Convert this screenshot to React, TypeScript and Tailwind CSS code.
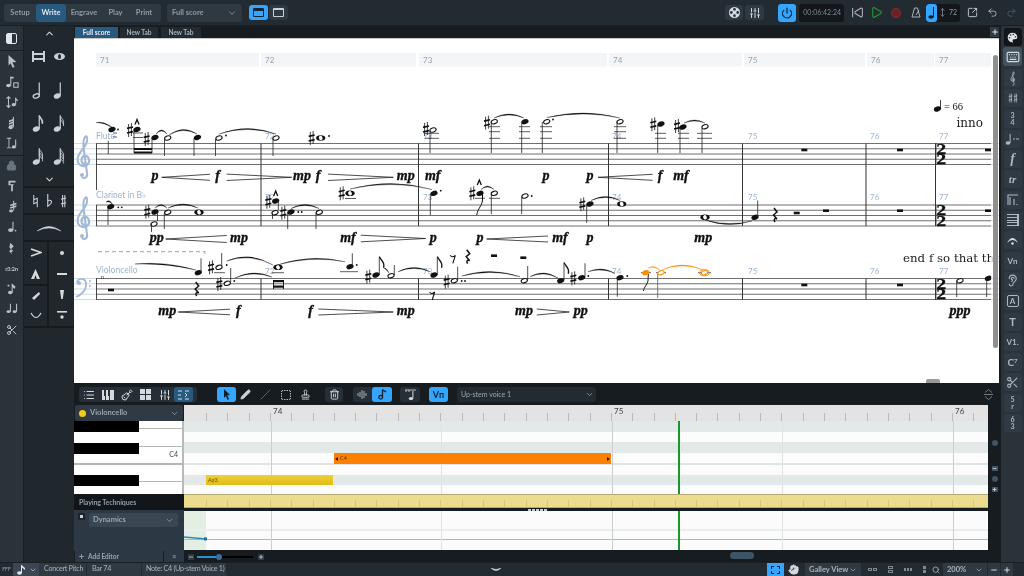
import React from "react";
import {
  ChevronDown, ChevronUp, Power, Play, SkipBack, Undo2, Redo2, SquareArrowOutUpRight, Lock, Pencil, Slash, Trash2, Hand, Search, Plus, Minus, List, SlidersVertical, Guitar, Music2, Keyboard, Palette, Ear, Scissors, MoveVertical, SquareDashed, Stamp,
} from "lucide-react";

const INK = "#111";
const BLUE = "#9db4d0";
const OR = "#ff8a00";

const head = (x: number, y: number, c = INK) => <ellipse cx={x} cy={y} rx={3.7} ry={2.5} fill={c} transform={`rotate(-18 ${x} ${y})`} />;
const open = (x: number, y: number, c = INK) => <ellipse cx={x} cy={y} rx={3.2} ry={2} fill="#fff" stroke={c} strokeWidth={1.1} transform={`rotate(-18 ${x} ${y})`} />;
const whole = (x: number, y: number, c = INK) => (
  <g>
    <ellipse cx={x} cy={y} rx={4.6} ry={2.8} fill={c} />
    <ellipse cx={x} cy={y} rx={1.8} ry={2.2} fill="#fff" transform={`rotate(-30 ${x} ${y})`} />
  </g>
);
const dot = (x: number, y: number) => <circle cx={x} cy={y} r={0.9} fill={INK} />;
const stem = (x: number, y1: number, y2: number, c = "#222") => <line x1={x} x2={x} y1={y1} y2={y2} stroke={c} strokeWidth={0.8} />;
const led = (x1: number, x2: number, y: number, c = "#333") => <line x1={x1} x2={x2} y1={y} y2={y} stroke={c} strokeWidth={0.8} />;
const sharp = (x: number, y: number) => (
  <g stroke={INK}>
    <line x1={x - 1.4} x2={x - 1.4} y1={y - 6} y2={y + 7} strokeWidth={0.8} />
    <line x1={x + 1.4} x2={x + 1.4} y1={y - 7} y2={y + 6} strokeWidth={0.8} />
    <line x1={x - 3} x2={x + 3} y1={y - 1.6} y2={y - 3} strokeWidth={1.6} />
    <line x1={x - 3} x2={x + 3} y1={y + 3} y2={y + 1.6} strokeWidth={1.6} />
  </g>
);
const slur = (x1: number, y1: number, x2: number, y2: number, top: number, c = INK) => {
  const cx = (x1 + x2) / 2;
  const cy = 2 * top - (y1 + y2) / 2;
  return <path d={`M${x1} ${y1} Q${cx} ${cy} ${x2} ${y2} Q${cx} ${cy + 2} ${x1} ${y1}Z`} fill={c} stroke={c} strokeWidth={0.3} />;
};
const uslur = (x1: number, y1: number, x2: number, y2: number, bot: number) => {
  const cx = (x1 + x2) / 2;
  const cy = 2 * bot - (y1 + y2) / 2;
  return <path d={`M${x1} ${y1} Q${cx} ${cy} ${x2} ${y2} Q${cx} ${cy - 2} ${x1} ${y1}Z`} fill={INK} stroke={INK} strokeWidth={0.3} />;
};
const flag = (x: number, y: number) => <path d={`M${x} ${y} C${x + 1} ${y + 4} ${x + 6} ${y + 5} ${x + 4} ${y + 11}`} stroke={INK} strokeWidth={1.3} fill="none" />;
const hair = (x1: number, x2: number, y: number, open: number, cresc: boolean) => {
  const a = cresc ? x1 : x2;
  const b = cresc ? x2 : x1;
  return (
    <g stroke="#222" strokeWidth={0.8}>
      <line x1={a} y1={y} x2={b} y2={y - open} />
      <line x1={a} y1={y} x2={b} y2={y + open} />
    </g>
  );
};
const dyn = (x: number, y: number, t: string) => (
  <text x={x} y={y + 3} textAnchor="middle" fontFamily="Liberation Serif" fontWeight="700" fontStyle="italic" fontSize={14} fill={INK} stroke={INK} strokeWidth={0.35}>{t}</text>
);
const num = (x: number, y: number, t: string) => (
  <text x={x} y={y} fontFamily="Lato" fontSize={8} fill={BLUE}>{t}</text>
);
const rest = (x: number, y: number) => <rect x={x - 3} y={y - 1.3} width={6} height={2.6} fill={INK} />;
const qrest = (x: number, y: number) => <path d={`M${x - 1} ${y - 7} L${x + 2} ${y - 3} L${x - 1.5} ${y} L${x + 2} ${y + 4} C${x} ${y + 3} ${x - 2} ${y + 4} ${x} ${y + 7}`} stroke={INK} strokeWidth={1.5} fill="none" />;
const erest = (x: number, y: number) => <path d={`M${x - 3} ${y - 3} C${x - 2} ${y - 1} ${x} ${y - 1} ${x + 2} ${y - 3} L${x - 0.5} ${y + 5}`} stroke={INK} strokeWidth={1.1} fill="none" />;
const accent = (x: number, y: number) => <path d={`M${x - 2} ${y + 2.5} L${x} ${y - 2.5} L${x + 2} ${y + 2.5}`} stroke={INK} strokeWidth={1.3} fill="none" />;
const timeSig = (y: number) => (
  <g>
    <rect x={935} y={y} width={1.4} height={21} fill="#333" />
    <text transform={`translate(936.3 ${y + 10.3}) scale(1.28 1)`} fontFamily="Liberation Serif" fontWeight="700" fontSize={15.5} fill={INK} stroke={INK} strokeWidth={0.3}>
      <tspan x={0} y={0}>2</tspan>
      <tspan x={0} y={10.6}>2</tspan>
    </text>
  </g>
);
const clef = (y: number) => (
  <g transform={`translate(84 ${y})`}>
    <path
      d="M1 5C-3 5-4-1 0-3C5-4 7 3 3 6C-2 9-8 5-6-2C-5-7 2-12 3-18C4-22 2-24 1-22C-1-19-1-14 0-8L3 14C4 19 0 20-2 18"
      fill="none"
      stroke="#a3b9d6"
      strokeWidth={2.1}
    />
    <circle cx={-2} cy={16} r={2} fill="#a3b9d6" />
  </g>
);

function Staff({ y }: { y: number }) {
  return (
    <g>
      {[0, 5.25, 10.5, 15.75, 21].map((d) => (
        <g key={d}>
          <line x1={74} x2={96} y1={y + d} y2={y + d} stroke="#c3d2e6" strokeWidth={0.8} />
          <line x1={96} x2={999} y1={y + d} y2={y + d} stroke="#4a4a4a" strokeWidth={0.8} />
        </g>
      ))}
    </g>
  );
}

const bars = [
  { l: "71", x: 96, w: 163 },
  { l: "72", x: 261, w: 155 },
  { l: "73", x: 419, w: 188 },
  { l: "74", x: 609, w: 133 },
  { l: "75", x: 744, w: 121 },
  { l: "76", x: 867, w: 67 },
  { l: "77", x: 935, w: 56 },
];
const barX = [261, 418.5, 608.5, 742.5, 866, 935.5];

function Score() {
  return (
    <svg viewBox="74 38 925 345" className="block w-[925px] h-[345px]">
      {bars.map((b) => (
        <g key={b.l}>
          <rect x={b.x} y={53} width={b.w} height={13.5} fill="#f4f5f6" />
          <text x={b.x + 4} y={62.5} fontFamily="Lato" fontSize={8} fill="#9aa3aa">{b.l}</text>
        </g>
      ))}
      <Staff y={143.5} />
      <Staff y={205} />
      <Staff y={278.5} />
      <rect x={96} y={143.5} width={0.9} height={47} fill="#333" />
      <rect x={96} y={205} width={0.9} height={21} fill="#333" />
      <rect x={96} y={278.5} width={0.9} height={21} fill="#333" />
      {barX.map((x) => (
        <g key={x} fill="#333">
          <rect x={x - 0.5} y={143.5} width={1} height={82.5} />
          <rect x={x - 0.5} y={278.5} width={1} height={21} />
        </g>
      ))}
      {clef(159)}
      {clef(220)}
      <g transform="translate(84 284)" fill="#a3b9d6">
        <path d="M-7 -1C-7 -6 1 -7 2 -1C3 6 -3 11 -8 13" fill="none" stroke="#a3b9d6" strokeWidth={1.8} />
        <circle cx={-5} cy={-1} r={2} />
        <circle cx={6} cy={-3} r={1.1} />
        <circle cx={6} cy={2} r={1.1} />
      </g>

      {/* labels */}
      <rect x={96} y={131} width={19} height={10} fill="#fff" fillOpacity={0.55} />
      <rect x={96} y={190} width={47} height={11} fill="#fff" />
      <text x={96} y={139} fontFamily="Lato" fontSize={8.5} fill={BLUE}>Flute</text>
      <text x={96} y={198} fontFamily="Lato" fontSize={8.5} fill={BLUE}>Clarinet in B♭</text>
      <text x={96} y={273} fontFamily="Lato" fontSize={8.5} fill={BLUE}>Violoncello</text>

      {num(265, 139, "72")}{num(423, 139, "73")}{num(612, 139, "74")}{num(748, 139, "75")}{num(870, 139, "76")}{num(939, 139, "77")}
      {num(265, 200, "72")}{num(423, 200, "73")}{num(612, 200, "74")}{num(748, 200, "75")}{num(870, 200, "76")}{num(939, 200, "77")}
      {num(265, 274, "72")}{num(423, 274, "73")}{num(612, 274, "74")}{num(748, 274, "75")}{num(870, 274, "76")}{num(939, 274, "77")}

      {/* flute */}
      {slur(96, 122.5, 113, 128, 123)}
      {head(112, 129.5)}{dot(118, 129.5)}{led(113, 117, 133)}{led(113, 117, 137)}{stem(108.3, 141, 154)}
      {sharp(130, 130)}{accent(137, 122)}{head(137, 129.5)}{led(133, 143, 133)}{led(133, 143, 137.5)}{stem(134, 130, 153)}
      <rect x={134} y={148} width={18} height={2} fill={INK} />
      <rect x={134} y={151.5} width={18} height={2} fill={INK} />
      {sharp(146.7, 139)}{head(155, 137.5)}{stem(152, 138, 153)}
      {slur(156, 134, 167, 134, 130)}{open(167.7, 138)}{stem(164.5, 139, 156)}
      {slur(169, 135, 197, 134, 129.5)}{head(197.5, 137.5)}{stem(194, 138, 156)}
      {open(219, 138)}{dot(226, 135.5)}{stem(215.5, 139, 156)}
      {slur(219, 134, 276, 134, 128.5)}{open(276, 138)}{stem(273, 139, 156)}
      {sharp(311.7, 138)}{whole(320.7, 138)}{dot(329, 136)}

      {sharp(426, 129)}{open(433, 130)}{led(425, 439, 133.3)}{led(425, 439, 138.3)}{stem(430, 131, 153)}
      {sharp(487, 122.7)}{open(494.3, 121.7)}{led(489, 500, 126.7)}{led(489, 500, 131.7)}{led(489, 500, 138.3)}{stem(491.3, 122, 153)}
      {slur(494, 118, 524, 118, 114)}{head(525, 121.7)}{led(519, 530, 126.7)}{led(519, 530, 131.7)}{led(519, 530, 138.3)}{stem(521.7, 122, 153)}
      {open(546.7, 121.7)}{dot(553, 119.5)}{led(540, 552, 126.7)}{led(540, 552, 131.7)}{led(540, 552, 138.3)}{stem(542.3, 122, 153)}
      {slur(547, 117.5, 620, 118, 113)}{open(620, 121.7)}{led(614, 626, 126.7)}{led(614, 626, 131.7)}{led(614, 626, 138.3)}{stem(617, 122, 153)}
      {sharp(653.3, 124.3)}{head(661, 124)}{led(655, 666, 133.3)}{led(655, 666, 138.3)}{stem(657.7, 125, 153)}
      {sharp(677, 126)}{head(683, 127)}{led(678, 689, 133.3)}{led(678, 689, 138.3)}{stem(680, 128, 153)}
      {slur(684, 123, 705, 123, 120)}{open(705, 126.7)}{led(697, 712, 133.3)}{led(697, 712, 138.3)}{stem(702, 128, 153)}
      {rest(804.3, 150)}{rest(900, 150)}{rest(988, 150)}

      {/* clarinet */}
      {slur(106, 202, 113, 205, 201)}{head(110.7, 206.7)}{dot(118.3, 207.3)}{dot(121.7, 207.3)}{stem(108, 208, 225)}
      {sharp(147.3, 211.7)}{head(155, 212)}{stem(157.5, 212, 221)}{open(154, 224)}{stem(151.5, 224, 232)}
      {slur(155, 208, 167, 208, 204.5)}{open(167.7, 212.3)}{stem(164.3, 213, 229)}
      {slur(168, 208, 198, 208, 204)}{whole(199, 212.3)}
      {accent(275.7, 193.5)}{sharp(268.3, 201.7)}{head(275.7, 201)}{stem(278.3, 201, 210)}{open(275, 212.7)}{stem(272.5, 213, 219)}
      {sharp(283.3, 212.7)}{head(291, 212)}{dot(298.3, 212)}{dot(301.7, 212)}{stem(287.7, 212, 229)}
      {slur(291, 208.5, 319, 208.5, 204.5)}{open(319.3, 212.3)}{stem(316, 213, 229)}
      {sharp(341.7, 193.3)}{whole(350, 193.3)}{led(345, 356, 198.5)}
      {slur(350, 189, 432, 189.5, 183.5)}{head(434, 193.3)}{dot(440.7, 190.7)}{stem(430.3, 194, 215)}
      {sharp(472.3, 193.3)}{accent(479.3, 182.5)}{head(480, 193.3)}{led(475, 485, 198.3)}
      <path d="M482.5 194 L482.5 200 C482 206 478 208 476.7 215" stroke={INK} strokeWidth={1} fill="none" />
      {slur(481, 189.5, 494, 189.5, 186)}{open(494.3, 193.3)}{led(489, 500, 198.3)}{stem(491.3, 194, 214)}
      {open(525, 196)}{dot(531.7, 196)}{stem(521.7, 197, 214)}
      {sharp(582.3, 204.3)}{head(590, 204)}{stem(586.7, 205, 223)}
      {slur(591, 200.5, 620, 200.5, 196.5)}{whole(621.7, 204)}
      {whole(705, 217.3)}{uslur(705, 220, 752, 221, 224.5)}{head(755, 217.3)}{stem(757.7, 200.5, 217)}
      {qrest(775, 215)}{rest(796.7, 213)}{rest(826, 210.7)}{rest(900, 210.7)}{rest(988, 210.7)}

      {/* cello */}
      <path d="M98 251.7H205V256" stroke="#777" strokeWidth={0.7} strokeDasharray="4 3" fill="none" />
      <text x={101} y={279} fontFamily="Liberation Serif" fontSize={6} fill="#333">n</text>
      {rest(111, 290)}
      {slur(135, 264, 196, 270, 264)}{head(198.3, 272.7)}{stem(201, 258.3, 272)}{qrest(196.7, 289)}
      {sharp(211, 267.3)}{open(219, 267.3)}{dot(226.7, 265)}{led(214, 225, 272.7)}{stem(221.7, 253, 266)}
      {sharp(219.3, 284)}{open(227.3, 283.3)}{dot(234.3, 281)}{stem(230.7, 268, 282)}
      {slur(226.7, 261, 273, 265, 257)}{slur(235, 278, 272, 277, 273)}
      {whole(278, 267.3)}{led(272, 284, 272.7)}
      <g fill={INK}><rect x={273} y={280} width={11} height={2.2} /><rect x={273} y={285.5} width={11} height={2.2} /><rect x={273} y={280} width={0.9} height={9} /><rect x={283} y={280} width={0.9} height={9} /></g>
      {slur(277, 265, 345, 261.7, 258.5)}
      {head(350, 266.7)}{dot(356.7, 265)}{stem(352.3, 253.3, 266)}{led(340, 358, 271.7)}
      {sharp(368.3, 276.7)}{head(376, 275)}{stem(379.3, 256.7, 275)}{flag(379.5, 256.7)}
      {slur(384, 268, 389, 273, 269)}{open(391, 275.7)}{stem(394.3, 265, 275)}
      {slur(398, 271.7, 430, 271.7, 267.5)}
      {head(434, 275)}{stem(437.3, 256.7, 275)}{flag(437.5, 256.7)}{erest(432.7, 295)}
      {sharp(446.7, 281.7)}{open(454.3, 280.7)}{dot(461.7, 281)}{dot(465, 281)}{stem(457.7, 266.7, 280)}
      {erest(453.3, 258.3)}{qrest(467.7, 256.7)}{rest(494, 255.7)}{rest(523.3, 257.7)}
      {slur(461.7, 276, 520, 276.7, 271.5)}{open(524.3, 280.7)}{stem(527.7, 266, 280)}
      {slur(530, 276.7, 558.3, 278.3, 273)}{head(560.7, 280.7)}{stem(564, 262.7, 280)}{flag(564.2, 262.7)}
      {sharp(573.3, 278.3)}{head(581.7, 277.7)}{dot(588.3, 276)}{stem(585, 263.3, 277)}
      {slur(588, 271.7, 615, 273.3, 269)}
      {head(620, 277.7)}{dot(627.3, 276)}{stem(617.3, 278, 296.7)}
      {led(641, 651, 272.7)}{head(645.7, 272.7, OR)}
      <path d="M648.3 274 L648 281 C647 285 644 287 643.3 291" stroke="#222" strokeWidth={1} fill="none" />
      {led(656, 666, 272.7)}{open(661, 272.7, OR)}{stem(657.7, 274, 298, "#555")}
      {slur(648, 268, 660, 270, 266.5, OR)}{slur(661.7, 270, 703, 270, 265, OR)}
      {led(698, 711, 272.7)}{open(704.5, 272.7, OR)}
      <ellipse cx={704.5} cy={272.7} rx={5} ry={3.1} fill="none" stroke={OR} strokeWidth={1} />
      {rest(804.3, 285)}{rest(900, 285)}
      {open(960, 280.7)}{stem(956.7, 281, 297)}{head(988.3, 278.3)}{stem(986.7, 280, 297)}
      {timeSig(143.5)}{timeSig(205)}{timeSig(278.5)}

      {/* dynamics */}
      {dyn(155, 177, "p")}{hair(161.7, 210, 177.3, 3, true)}{dyn(217.7, 177, "f")}{hair(226.7, 291.7, 177.3, 3.2, false)}
      {dyn(302, 177, "mp")}{dyn(318, 177, "f")}{hair(328, 393.3, 177.3, 3.2, false)}{dyn(405.7, 177, "mp")}
      {dyn(432.7, 177, "mf")}{dyn(546, 177, "p")}{dyn(590, 177, "p")}{hair(598, 652.7, 177.3, 3, true)}{dyn(660, 177, "f")}{dyn(681, 177, "mf")}
      {dyn(156.7, 238.5, "pp")}{hair(165.7, 226.7, 239, 3.5, true)}{dyn(239, 238.5, "mp")}
      {dyn(348, 238.5, "mf")}{hair(360.7, 425.7, 238.5, 3.3, false)}{dyn(433.3, 238.5, "p")}
      {dyn(480, 238.5, "p")}{hair(486.7, 548, 239, 3, true)}{dyn(560, 238.5, "mf")}{dyn(590, 238.5, "p")}{dyn(703.3, 238.5, "mp")}
      {dyn(167.3, 311.7, "mp")}{hair(178.3, 230, 312, 2.8, true)}{dyn(238.3, 311.7, "f")}
      {dyn(310.7, 311.7, "f")}{hair(318.3, 393.3, 312, 3, false)}{dyn(405.7, 311.7, "mp")}
      {dyn(524, 311.7, "mp")}{hair(536.7, 569.3, 312, 3, false)}{dyn(580.7, 311.7, "pp")}{dyn(960, 311.7, "ppp")}

      {/* tempo and text */}
      {head(937.5, 109)}{stem(940.5, 100, 108.5, INK)}
      <text x={944} y={110} fontFamily="Liberation Serif" fontSize={10.5} fill={INK}>= 66</text>
      <text x={956.5} y={127.3} fontFamily="DejaVu Serif" fontSize={12} fill="#222">inno</text>
      <text x={903} y={261.7} fontFamily="DejaVu Serif" fontSize={11.8} fill="#222">end f so that the</text>
      <rect x={991} y={38} width={8} height={345} fill="#fff" fillOpacity={0.75} />
      <rect x={74} y={38} width={925} height={1} fill="#c9c9c9" />
    </svg>
  );
}

/* small note glyphs for palettes */
function Nt({ flags = 0, hollow = false, hatch = false, size = 15, c = "#c9d0d6" }: { flags?: number; hollow?: boolean; hatch?: boolean; size?: number; c?: string }) {
  return (
    <svg viewBox="0 0 20 24" width={size} height={size * 1.2}>
      {hollow ? (
        <ellipse cx={7} cy={20} rx={4.2} ry={2.6} fill="none" stroke={c} strokeWidth={1.8} transform="rotate(-20 7 20)" />
      ) : (
        <ellipse cx={7} cy={20} rx={4.8} ry={3.4} fill={c} transform="rotate(-20 7 20)" />
      )}
      <line x1={11} x2={11} y1={2} y2={19} stroke={c} strokeWidth={1.6} />
      {Array.from({ length: flags }).map((_, i) => (
        <path key={i} d={`M11 ${2 + i * 4} C12 ${6 + i * 4} 17 ${8 + i * 4} 15 ${13 + i * 3}`} fill="none" stroke={c} strokeWidth={hatch ? 1.3 : 2} />
      ))}
    </svg>
  );
}

function Box({ children, className = "" }: { children?: React.ReactNode; className?: string }) {
  return <div className={`flex items-center justify-center ${className}`}>{children}</div>;
}

const tiny = "fill-[#b9c1c8] stroke-[#b9c1c8]";
function G({ children, w = 14, h = 14 }: { children: React.ReactNode; w?: number; h?: number }) {
  return <svg viewBox="0 0 16 16" width={w} height={h} className={tiny} strokeWidth={0}>{children}</svg>;
}

function Acc({ k, w = 7, h = 14, c = "#c9d0d6" }: { k: "n" | "f" | "s"; w?: number; h?: number; c?: string }) {
  return (
    <svg viewBox="0 0 8 16" width={w} height={h} fill="none" stroke={c}>
      {k === "n" && <path d="M2 1V11L6 9.5 M6 15V5L2 6.5" strokeWidth={1.2} />}
      {k === "f" && <path d="M2 0V14C5 12 7 10 6 8C5 6.5 3 7 2 8.5" strokeWidth={1.3} />}
      {k === "s" && <path d="M3 1V15 M5.5 1V15 M1 6L7 4.5 M1 11.5L7 10" strokeWidth={1.2} />}
    </svg>
  );
}

function LeftRail() {
  const item = "h-[20.5px]";
  return (
    <div className="w-[24px] shrink-0 bg-[#2b333a] border-r border-[#1a1f24] flex flex-col items-center">
      <Box className="h-[25px] w-full border-b border-[#1a1f24]">
        <div className="w-[11px] h-[11px] rounded-[2px] border border-[#e2e6e9] flex">
          <div className="w-[5px] bg-[#e2e6e9]" />
        </div>
      </Box>
      <Box className={item}><G><path d="M4 1 L13 9 L8.5 9.5 L11 15 L8.5 15.5 L6.5 10.5 L4 13Z" /></G></Box>
      <Box className={item}><G><ellipse cx="4" cy="12" rx="2.7" ry="2" /><rect x="6" y="2" width="1.2" height="10" /><path d="M6 2 H10 V4 H7Z" /><rect x="10" y="9" width="5" height="5" fill="none" strokeWidth={1.2} /></G></Box>
      <Box className={item}><G><rect x="3.4" y="2" width="1.2" height="12" /><path d="M1 4 L4 1 L7 4Z M1 12 L4 15 L7 12Z" /><ellipse cx="10" cy="11" rx="2.4" ry="1.8" /><rect x="11.6" y="3" width="1.2" height="8" /><path d="M12 3 L15 6 L14 7 L12 5Z" /></G></Box>
      <Box className={item}><G><rect x="9" y="1" width="1.2" height="12" /><path d="M4.5 5 L10 3 V5 L4.5 7Z M4.5 8 L10 6 V8 L4.5 10Z M4.5 11 L10 9 V11 L4.5 13Z" /><ellipse cx="6.5" cy="13" rx="2.6" ry="2" /></G></Box>
      <Box className={item}><G><path d="M2 2 H7 V3 H5 V13 H7 V14 H2 V13 H4 V3 H2Z" /><ellipse cx="10" cy="12.5" rx="2.4" ry="1.8" /><rect x="11.6" y="4" width="1.2" height="8.5" /></G></Box>
      <div className="w-full border-t border-[#1a1f24] mt-[1px]" />
      <Box className={item}><Lock size={11} className="text-[#6a747d]" fill="#6a747d" /></Box>
      <Box className={item}><G><path d="M4 2 H12 V4 H6 V6 H10 V7 H9 V14 H7 V7 H4Z" /></G></Box>
      <Box className={item}><G><rect x="9.3" y="1" width="1.2" height="11" /><path d="M6 5 L13 3 V5 L6 7Z M6 8 L13 6 V8 L6 10Z" /><ellipse cx="7" cy="12.5" rx="2.3" ry="1.7" /></G></Box>
      <Box className={item}><G><ellipse cx="6.5" cy="11.5" rx="3" ry="2.2" /><rect x="8.5" y="2" width="1.2" height="9.5" /><circle cx="12" cy="12" r="1" /></G></Box>
      <Box className={item}><G><path d="M6 2 L10 6 L7 9 L10 12 C8 11.5 6.5 12 8 15 L5 12 C5 10 7 10 7 10 L5 7Z" /></G></Box>
      <Box className={item}><span className="text-[6px] font-bold text-[#b9c1c8] tracking-tighter">r3:2n</span></Box>
      <Box className={item}><G><ellipse cx="6" cy="12" rx="2.6" ry="1.9" /><rect x="7.6" y="2" width="1.2" height="10" /><path d="M8 2 L12 5 L11 8 L8 5Z M3 3 L5 3 L5 5 L3 5Z" /></G></Box>
      <Box className={item}><G><ellipse cx="4" cy="11" rx="2.3" ry="1.7" /><ellipse cx="11" cy="11" rx="2.3" ry="1.7" /><rect x="5.6" y="2" width="1.2" height="9" /><rect x="12.6" y="2" width="1.2" height="9" /></G></Box>
      <Box className={item}><Scissors size={12} className="text-[#b9c1c8]" /></Box>
    </div>
  );
}

function NotePanel() {
  return (
    <div className="w-[50px] shrink-0 bg-[#20272d] flex flex-col text-[#c9d0d6]">
      <Box className="h-[14px]"><ChevronUp size={11} strokeWidth={2.5} /></Box>
      <div className="grid grid-cols-2 auto-rows-[33px] px-[4px] justify-items-center items-center h-[132px]">
        <div className="w-[13px] h-[11px] border-x-2 border-[#c9d0d6] flex flex-col justify-center gap-[3px]"><div className="h-[2px] bg-[#c9d0d6]" /><div className="h-[2px] bg-[#c9d0d6]" /></div>
        <div className="w-[11px] h-[7px] rounded-[50%] border-x-[4px] border-y-[1.5px] border-[#c9d0d6]" />
        <Nt hollow /><Nt /><Nt flags={1} /><Nt flags={2} hatch /><Nt flags={3} hatch /><Nt flags={4} hatch />
      </div>
      <Box className="h-[14px]"><ChevronDown size={11} strokeWidth={2.5} /></Box>
      <div className="h-[27px] border-t-2 border-[#151a1e] flex items-center justify-around px-[4px]">
        <Acc k="n" /><Acc k="f" /><Acc k="s" />
      </div>
      <Box className="h-[27px] border-t-2 border-[#151a1e]">
        <svg width="26" height="8" viewBox="0 0 26 8"><path d="M1 7 Q13 -2 25 7 Q13 1 1 7Z" fill="#d5dadf" stroke="#d5dadf" strokeWidth="0.4" /></svg>
      </Box>
      <div className="grid grid-cols-2 border-t-2 border-b-2 border-[#151a1e] h-[88px] auto-rows-fr">
        <Box className="border-r-2 border-[#151a1e]"><svg width="12" height="9" viewBox="0 0 12 9"><path d="M1 1 L11 4.5 L1 8" fill="none" stroke="#d5dadf" strokeWidth="1.8" /></svg></Box>
        <Box><div className="w-[4px] h-[4px] rounded-full bg-[#d5dadf]" /></Box>
        <Box className="border-r-2 border-[#151a1e]"><svg width="9" height="10" viewBox="0 0 9 10"><path d="M4.5 0 L9 10 H5.8 L4.5 6 L3.2 10 H0Z" fill="#d5dadf" /></svg></Box>
        <Box><div className="w-[10px] h-[2px] bg-[#d5dadf]" /></Box>
        <Box className="border-r-2 border-[#151a1e] border-t-2"><svg width="8" height="8" viewBox="0 0 8 8"><path d="M7 0 L8 2 L2 8 L0 6Z" fill="#d5dadf" /></svg></Box>
        <Box><svg width="4" height="9" viewBox="0 0 4 9"><path d="M0 0 H4 L2.8 9 H1.2Z" fill="#d5dadf" /></svg></Box>
        <Box className="border-r-2 border-[#151a1e]"><svg width="12" height="8" viewBox="0 0 12 8"><path d="M1 1 Q6 10 11 1" fill="none" stroke="#d5dadf" strokeWidth="1.2" /></svg></Box>
        <Box><svg width="10" height="9" viewBox="0 0 10 9"><rect x="0" y="0" width="10" height="1.6" fill="#d5dadf" /><circle cx="5" cy="6" r="1.7" fill="#d5dadf" /></svg></Box>
      </div>
    </div>
  );
}

function RightPanel() {
  const btn = "w-[18px] h-[18px] mb-[2.3px] rounded-[3px] bg-[#2f3a44] flex items-center justify-center text-[#aeb7bf] shrink-0";
  const Serif = ({ t, cls = "" }: { t: string; cls?: string }) => <span className={`[font-family:'Liberation_Serif',serif] italic font-bold ${cls}`}>{t}</span>;
  return (
    <div className="w-[25px] shrink-0 bg-[#2b333a] border-l-2 border-[#171c21] flex flex-col items-center pt-[2px]">
      <div className="w-[18px] h-[18px] mb-[1px] rounded-[3px] bg-[#12161a] flex items-center justify-center"><Palette size={13} className="text-[#e3e6e9]" fill="#e3e6e9" stroke="#12161a" /></div>
      <div className="w-[19px] h-[19px] mb-[3px] rounded-[3px] bg-[#44525f] flex items-center justify-center"><Keyboard size={14} className="text-[#d5dadf]" /></div>
      <div className={btn}><svg width="12" height="15" viewBox="-9 -25 18 46"><path d="M1 5C-3 5-4-1 0-3C5-4 7 3 3 6C-2 9-8 5-6-2C-5-7 2-12 3-18C4-22 2-24 1-22C-1-19-1-14 0-8L3 14C4 19 0 20-2 18" fill="none" stroke="#aeb7bf" strokeWidth="2.5" /></svg></div>
      <div className={btn}><Acc k="s" w={5} h={10} c="#aeb7bf" /><Acc k="s" w={5} h={10} c="#aeb7bf" /></div>
      <div className={btn}><span className="text-[7px] leading-[7px] font-bold flex flex-col items-center"><span>3</span><span>4</span></span></div>
      <div className={btn}><svg width="15" height="12" viewBox="0 0 15 12"><ellipse cx="3" cy="10" rx="2.4" ry="1.7" fill="#aeb7bf" /><rect x="4.6" y="1" width="1" height="9" fill="#aeb7bf" /><path d="M8 6 h2 M11 6 h3" stroke="#aeb7bf" strokeWidth="1.2" /></svg></div>
      <div className={btn}><Serif t="f" cls="text-[14px] leading-none" /></div>
      <div className={btn}><Serif t="tr" cls="text-[11px] leading-none" /></div>
      <div className={btn}><svg width="11" height="11" viewBox="0 0 11 11"><path d="M1 11V1H11 M3 11V3 M7 11V5 M10 11v-1" stroke="#aeb7bf" strokeWidth="1.1" fill="none" /></svg></div>
      <div className={btn}><div className="w-[12px] h-[12px] flex flex-col justify-between border-r-2 border-[#aeb7bf]">{[0, 1, 2, 3, 4].map((i) => <div key={i} className="h-[1px] bg-[#aeb7bf]" />)}</div></div>
      <div className={btn}><svg width="13" height="9" viewBox="0 0 13 9"><path d="M1 7 Q6.5 -3 12 7 Q6.5 1 1 7Z" fill="#d5dadf" /><circle cx="6.5" cy="7.5" r="1.3" fill="#d5dadf" /></svg></div>
      <div className={btn}><span className="text-[8px] font-bold leading-none">V</span><span className="text-[8px] font-bold leading-none">п</span></div>
      <div className={btn}><Ear size={13} /></div>
      <div className={btn}><div className="w-[12px] h-[12px] border border-[#aeb7bf] rounded-[2px] flex items-center justify-center text-[8px] font-bold leading-none">A</div></div>
      <div className={btn}><span className="text-[11px] font-bold leading-none">T</span></div>
      <div className={btn}><span className="text-[8px] font-bold leading-none">V1.</span></div>
      <div className={btn}><span className="text-[10px] font-bold leading-none">C<sup className="text-[6px]">7</sup></span></div>
      <div className={btn}><Scissors size={13} /></div>
      <div className={btn}><span className="text-[7px] leading-[7px] font-bold flex flex-col items-center"><span>5</span><span>r</span></span></div>
      <div className={btn}><span className="text-[7px] leading-[7px] font-bold flex flex-col items-center"><span>6</span><span>3</span></span></div>
    </div>
  );
}

function TopBar() {
  const mode = "h-[18px] flex items-center text-[7.5px] font-bold";
  return (
    <div className="h-[26px] shrink-0 bg-[#232b32] flex items-center text-[#8f9aa4] border-b border-[#1a1f24]">
      <div className="ml-[4px] w-[157px] h-[18px] bg-[#2f3942] rounded-[3px] flex items-center">
        <div className={`${mode} w-[32px] justify-center`}>Setup</div>
        <div className={`${mode} w-[30px] justify-center bg-[#28597f] rounded-[3px] text-[#dbe6ee]`}>Write</div>
        <div className={`${mode} w-[36px] justify-center`}>Engrave</div>
        <div className={`${mode} w-[27px] justify-center`}>Play</div>
        <div className={`${mode} w-[30px] justify-center`}>Print</div>
      </div>
      <div className="ml-[6px] w-[75px] h-[18px] bg-[#2f3942] rounded-[3px] flex items-center justify-between px-[5px] text-[7.5px] font-bold">
        <span>Full score</span><ChevronDown size={10} />
      </div>
      <div className="ml-[7px] w-[19px] h-[15px] rounded-[3px] bg-[#35a6ff] flex items-center justify-center">
        <div className="w-[11px] h-[9px] border border-[#12242f] border-t-[3px] rounded-[1px]" />
      </div>
      <div className="ml-[1px] w-[19px] h-[15px] rounded-[3px] bg-[#2f3942] flex items-center justify-center">
        <div className="w-[11px] h-[9px] border border-[#c9d0d6] border-t-[2px] rounded-[1px]" />
      </div>
      <div className="ml-[437px] w-[18px] h-[15px] rounded-[3px] bg-[#2f3942] flex items-center justify-center">
        <svg width="13" height="13" viewBox="0 0 13 13"><circle cx="6.5" cy="6.5" r="5.5" fill="#d5dadf" /><circle cx="6.5" cy="3.3" r="1.4" fill="#2f3942" /><circle cx="6.5" cy="9.7" r="1.4" fill="#2f3942" /><circle cx="3.3" cy="6.5" r="1.4" fill="#2f3942" /><circle cx="9.7" cy="6.5" r="1.4" fill="#2f3942" /></svg>
      </div>
      <div className="ml-[2px] w-[19px] h-[15px] rounded-[3px] bg-[#2f3942] flex items-center justify-center"><SlidersVertical size={12} className="text-[#d5dadf]" /></div>
      <div className="ml-[14px] w-[18px] h-[18px] rounded-[3px] bg-[#35a6ff] flex items-center justify-center"><Power size={12} className="text-[#12242f]" strokeWidth={2.5} /></div>
      <div className="ml-[3px] w-[45px] h-[18px] rounded-[3px] bg-[#13171b] flex items-center justify-end pr-[3px] text-[7px] text-[#7e8992]">00:06:42:24</div>
      <SkipBack size={13} className="ml-[7px] text-[#a9b1b8]" />
      <Play size={13} className="ml-[6px] text-[#1f9a2e]" strokeWidth={2} />
      <div className="ml-[8px] w-[10px] h-[10px] rounded-full bg-[#6d1f26] border border-[#8d2a30]" />
      <svg width="10" height="11" viewBox="0 0 10 11" className="ml-[10px]"><path d="M3.5 1 H6.5 L9 10 H1Z M5 8 L8 3" fill="none" stroke="#a9b1b8" strokeWidth="1" /></svg>
      <div className="ml-[5px] w-[34px] h-[18px] rounded-[3px] bg-[#13171b] flex items-center overflow-hidden">
        <div className="w-[11px] h-full bg-[#35a6ff] rounded-[3px] flex items-center justify-center"><svg width="8" height="13" viewBox="0 0 8 13"><ellipse cx="3" cy="11" rx="2.7" ry="1.8" fill="#10202c" /><rect x="5" y="1" width="1" height="10" fill="#10202c" /></svg></div>
        <MoveVertical size={9} className="text-[#8c969e] ml-[1px]" />
        <span className="text-[7px] text-[#8c969e] ml-[2px]">72</span>
      </div>
      <SquareArrowOutUpRight size={11} className="ml-[7px] text-[#c9d0d6]" />
      <Undo2 size={11} className="ml-[9px] text-[#a9b1b8]" />
      <Redo2 size={11} className="ml-[8px] text-[#4d5862]" />
    </div>
  );
}

function Tabs() {
  const t = "h-[11px] flex items-center justify-center text-[6.5px] font-bold";
  return (
    <div className="h-[12px] shrink-0 bg-[#171c21] flex items-end relative">
      <div className={`${t} ml-[1px] w-[43px] bg-[#28597f] text-[#e6edf2]`}>Full score</div>
      <div className={`${t} ml-[2px] w-[38px] bg-[#232b32] text-[#a9b1b8]`}>New Tab</div>
      <div className={`${t} ml-[3px] w-[40px] bg-[#232b32] text-[#a9b1b8]`}>New Tab</div>
      <div className="absolute left-[916px] top-[1px] w-[9px] h-[10px] bg-[#2f3a44] flex items-center justify-center"><Plus size={8} strokeWidth={3} className="text-[#e2e6e9]" /></div>
    </div>
  );
}

function BottomTools() {
  const bi = "w-[19px] h-[15px] flex items-center justify-center text-[#d5dadf]";
  return (
    <div className="h-[22px] shrink-0 bg-[#171c21] flex items-center relative pt-[1px]">
      <div className="ml-[5px] w-[118px] h-[15px] bg-[#262f37] rounded-[3px] flex items-center">
        <div className={bi}><List size={12} /></div>
        <div className={bi}><svg width="12" height="10" viewBox="0 0 12 10"><path d="M0 0H3V10H0Z M4 0H7V10H4Z M8 0H12V10H8Z" fill="#d5dadf" /><path d="M2 0H3V6H2Z M6 0H7V6H6Z" fill="#262f37" /></svg></div>
        <div className={bi}><Guitar size={12} /></div>
        <div className={bi}><div className="grid grid-cols-2 gap-[1.5px]">{[0, 1, 2, 3].map((i) => <div key={i} className="w-[4.5px] h-[4.5px] bg-[#d5dadf]" />)}</div></div>
        <div className={bi}><SlidersVertical size={12} /></div>
        <div className="w-[19px] h-[15px] rounded-[3px] bg-[#28597f] flex items-center justify-center"><svg width="11" height="10" viewBox="0 0 11 10"><path d="M0 1H4M0 5H3M0 9H4M7 1H11M7 3L9 5L7 7M7 9H11" stroke="#cfe3f2" fill="none" /></svg></div>
      </div>
      <div className="ml-[20px] w-[19px] h-[15px] rounded-[3px] bg-[#35a6ff] flex items-center justify-center"><svg width="8" height="11" viewBox="0 0 8 11"><path d="M1 0 L7 6 L4.2 6.3 L6 10 L4.5 11 L3 7 L1 9Z" fill="#10202c" /></svg></div>
      <Pencil size={11} className="ml-[4px] text-[#c9d0d6]" fill="#c9d0d6" />
      <Slash size={11} className="ml-[9px] text-[#5d6872]" />
      <SquareDashed size={12} className="ml-[9px] text-[#c9d0d6]" />
      <Stamp size={11} className="ml-[8px] text-[#c9d0d6]" />
      <div className="ml-[14px] w-[18px] h-[15px] rounded-[3px] bg-[#262f37] flex items-center justify-center"><Trash2 size={11} className="text-[#d5dadf]" /></div>
      <div className="ml-[10px] w-[39px] h-[15px] rounded-[3px] bg-[#262f37] flex items-center">
        <div className="w-[19px] flex items-center justify-center"><svg width="11" height="9" viewBox="0 0 11 9"><path d="M1 3V6 M3 2V7 M5 0V9 M7 1V8 M9 3V6" stroke="#9aa5ae" strokeWidth="1.1" /></svg></div>
        <div className="w-[20px] h-[15px] rounded-[3px] bg-[#35a6ff] flex items-center justify-center"><Music2 size={11} className="text-[#10202c]" strokeWidth={2.8} /></div>
      </div>
      <div className="ml-[8px] w-[20px] h-[15px] rounded-[3px] bg-[#262f37] flex items-center justify-center"><svg width="13" height="11" viewBox="0 0 13 11"><path d="M1 1H12 M2 1V3 M5 1V3" stroke="#b5bdc4" fill="none" /><ellipse cx="7" cy="9.5" rx="2.2" ry="1.5" fill="#d5dadf" /><rect x="8.4" y="2" width="1" height="7" fill="#d5dadf" /></svg></div>
      <div className="ml-[9px] w-[19px] h-[15px] rounded-[3px] bg-[#35a6ff] flex items-center justify-center"><span className="text-[9px] font-bold text-[#10202c] leading-none">Vп</span></div>
      <div className="ml-[9px] w-[139px] h-[15px] rounded-[3px] bg-[#232b32] flex items-center justify-between pl-[4px] pr-[2px] text-[7px] text-[#9aa5ae]">
        <span>Up-stem voice 1</span><ChevronDown size={9} />
      </div>
      <svg width="9" height="11" viewBox="0 0 9 11" className="absolute left-[910px] top-[6px]"><path d="M1 3.5 L4.5 0.5 L8 3.5 M0 5.5H9 M1 7.5 L4.5 10.5 L8 7.5" stroke="#7e8992" strokeWidth="0.9" fill="none" /></svg>
    </div>
  );
}

const tickBars = [271, 612, 953];
const ticks = Array.from({ length: 38 }).map((_, i) => 206 + i * 21.31).filter((x) => x < 988);

function Ticks({ cls }: { cls: string }) {
  return (
    <>
      {ticks.map((x) => (
        <div key={x} className={`absolute w-[1px] ${cls}`} style={{ left: x - 184 }} />
      ))}
    </>
  );
}

function VLines({ top, bottom }: { top: number; bottom: number }) {
  return (
    <>
      {[271, 441, 612, 782, 953].map((x, i) => (
        <div key={x} className={`absolute w-[1px] ${i % 2 === 0 ? "bg-[#c9d0d0]" : "bg-[#dfe3e3]"}`} style={{ left: x - 184, top, bottom }} />
      ))}
    </>
  );
}

function KeyEditor() {
  return (
    <div className="flex-1 flex flex-col bg-[#171c21] relative">
      <div className="h-[89px] flex shrink-0">
        <div className="w-[110px] shrink-0 flex flex-col">
          <div className="h-[16px] bg-[#2f3a45] rounded-[2px] ml-[1px] mr-[1px] flex items-center justify-between px-[4px] text-[7.5px] font-bold text-[#98a5b0]">
            <div className="flex items-center gap-[4px]"><div className="w-[7px] h-[7px] rounded-full bg-[#f4cb1a]" /><span>Violoncello</span></div>
            <ChevronDown size={9} />
          </div>
          <div className="flex-1 bg-white relative border-r-2 border-[#b9b9b9]">
            <div className="absolute left-0 top-0 w-[65px] h-[11px] bg-black" />
            <div className="absolute left-0 top-[21.5px] w-[65px] h-[11px] bg-black" />
            <div className="absolute left-0 top-[53.5px] w-[65px] h-[11px] bg-black" />
            <div className="absolute left-[65px] right-0 top-[7px] h-[1px] bg-[#b5b5b5]" />
            <div className="absolute left-[65px] right-0 top-[25px] h-[1px] bg-[#b5b5b5]" />
            <div className="absolute left-0 right-0 top-[42px] h-[2px] bg-[#b5b5b5]" />
            <div className="absolute left-[65px] right-0 top-[60px] h-[1px] bg-[#b5b5b5]" />
            <span className="absolute right-[4px] top-[30px] text-[7px] leading-none text-[#444]">C4</span>
          </div>
        </div>
        <div className="flex-1 relative bg-white mr-[11px]">
          <div className="h-[16px] bg-[#e3e3e3] relative">
            <Ticks cls="bottom-0 h-[8px] bg-[#b9b9b9]" />
            {tickBars.map((x, i) => (
              <span key={x} className="absolute top-[1px] text-[8px] leading-[10px] text-[#444]" style={{ left: x - 182 }}>{74 + i}</span>
            ))}
          </div>
          <div className="h-[11px] bg-[#e3e9e9]" />
          <div className="h-[10px] bg-[#fcfcfc]" />
          <div className="h-[11px] bg-[#e3e9e9]" />
          <div className="h-[10px] bg-[#fcfcfc]" />
          <div className="h-[2px] bg-[#dfe3e3]" />
          <div className="h-[10px] bg-[#fcfcfc]" />
          <div className="h-[10px] bg-[#e3e9e9]" />
          <div className="h-[9px] bg-[#fcfcfc]" />
          <VLines top={16} bottom={0} />
          <div className="absolute left-[150px] top-[48px] w-[277px] h-[11px] bg-[#ff8000] flex items-center justify-between px-[1px] text-[5.5px] text-[#5b3000]">
            <span className="flex items-center gap-[2px]"><span className="w-0 h-0 border-y-[2.5px] border-y-transparent border-r-[3px] border-r-[#222]" />C4</span>
            <span className="w-0 h-0 border-y-[2.5px] border-y-transparent border-l-[3px] border-l-[#222]" />
          </div>
          <div className="absolute left-[22px] top-[70px] w-[127px] h-[10px] bg-gradient-to-b from-[#edcf3a] to-[#e2bd12] flex items-center pl-[2px] text-[5.5px] text-[#6a5500]">A♯3</div>
          <div className="absolute left-[493.5px] top-[16px] bottom-0 w-[2px] bg-[#199a28]" />
        </div>
      </div>
      <div className="h-[16px] flex shrink-0">
        <div className="w-[110px] shrink-0 bg-[#12161a] flex items-center pl-[5px] text-[7px] font-bold text-[#8f9aa4] tracking-[-0.1px]">Playing Techniques</div>
        <div className="flex-1 mr-[11px] relative h-[14px] bg-[#ecdc90] border-y border-[#b5ab72]">
          <Ticks cls="bottom-0 h-[7px] bg-[#d5c780]" />
        </div>
        <div className="absolute left-[454px] top-[104px] flex gap-[1px]">
          {[0, 1, 2, 3, 4].map((i) => <div key={i} className="w-[3px] h-[2px] bg-[#c9cccf]" />)}
        </div>
      </div>
      <div className="h-[41px] flex shrink-0">
        <div className="w-[110px] shrink-0 bg-[#2c3843] relative flex items-start">
          <div className="absolute left-[4px] top-[3px] w-[7px] h-[7px] rounded-[1px] bg-[#1d2329] flex items-center justify-center"><div className="w-[3px] h-[3px] bg-[#c9d0d6]" /></div>
          <div className="ml-[15px] mt-[3px] w-[89px] h-[14px] rounded-[3px] bg-[#3a4753] flex items-center justify-between px-[4px] text-[7.5px] font-bold text-[#98a5b0]">
            <span>Dynamics</span><ChevronDown size={9} />
          </div>
        </div>
        <div className="flex-1 mr-[11px] relative bg-[#fbfbfb] mt-[1px] mb-[1px]">
          <div className="absolute left-0 top-0 bottom-0 w-[22px] bg-[#e3efe3]" />
          <div className="absolute left-0 right-0 top-[18px] h-[2px] bg-[#e9eeee]" />
          <div className="absolute left-0 right-0 top-[28px] h-[1px] bg-[#b5b5b5]" />
          <VLines top={0} bottom={0} />
          <svg className="absolute left-0 top-[24px]" width="24" height="6" viewBox="0 0 24 6"><path d="M0 2 L22 4" stroke="#2a8cc0" strokeWidth="1.6" /><rect x="20" y="2.4" width="3" height="3" fill="#1f6c9c" /></svg>
          <div className="absolute left-[493.5px] top-0 bottom-0 w-[2px] bg-[#199a28]" />
        </div>
      </div>
      <div className="h-[11px] flex shrink-0 items-center relative">
        <div className="ml-[1px] w-[88px] h-[11px] bg-[#2c3843] flex items-center gap-[3px] pl-[3px] text-[6.5px] font-bold text-[#98a5b0]"><Plus size={7} strokeWidth={3} /><span>Add Editor</span></div>
        <div className="ml-[1px] w-[20px] h-[11px] bg-[#2c3843] flex items-center justify-center text-[7px] text-[#a9b5bf]">≡</div>
        <div className="ml-[4px] w-[6px] h-[6px] bg-[#2c3843] flex items-center justify-center"><Minus size={6} className="text-[#d5dadf]" strokeWidth={3} /></div>
        <div className="ml-[3px] w-[56px] h-[2px] bg-black relative">
          <div className="w-[22px] h-full bg-[#2b8fd1]" />
          <div className="absolute left-[19px] top-[-2px] w-[6px] h-[6px] rounded-full bg-[#3b6f96]" />
        </div>
        <div className="ml-[5px] w-[6px] h-[6px] bg-[#2c3843] flex items-center justify-center"><Plus size={6} className="text-[#d5dadf]" strokeWidth={3} /></div>
        <div className="absolute left-[656px] top-[1px] w-[24px] h-[7px] rounded-full bg-[#3d5366]" />
      </div>
      <div className="absolute left-[917px] top-[35px] flex flex-col items-center w-[7px]">
        <div className="w-[6px] h-[6px] rounded-full bg-[#3d5366]" />
        <div className="mt-[20px] w-[6px] h-[5px] bg-[#3d5366] flex items-center justify-center"><Minus size={5} className="text-white" strokeWidth={3} /></div>
        <div className="mt-[5px] w-[6px] h-[6px] rounded-full bg-[#3d5366]" />
        <div className="mt-[5px] w-[6px] h-[5px] bg-[#3d5366] flex items-center justify-center"><Plus size={5} className="text-white" strokeWidth={3} /></div>
      </div>
    </div>
  );
}

function StatusBar() {
  const txt = "h-full flex items-center text-[7.2px] tracking-[-0.3px] whitespace-nowrap text-[#aab3bb]";
  const bold = "flex items-center justify-between px-[4px] text-[7.5px] font-bold whitespace-nowrap text-[#aab3bb]";
  return (
    <div className="h-[14px] shrink-0 bg-[#232b32] flex items-center border-t border-[#1a1f24] [&>*]:shrink-0">
      <div className="w-[13px] text-center text-[5px] text-[#9aa5ae]">FFF</div>
      <div className="w-[26px] h-full bg-[#3a4651] flex items-center justify-between pl-[4px] pr-[2px]">
        <svg width="8" height="11" viewBox="0 0 8 11"><ellipse cx="2.5" cy="9" rx="2.4" ry="1.7" fill="#e2e6e9" /><rect x="4" y="1" width="1" height="8" fill="#e2e6e9" /><path d="M4.5 1 L8 4 V6 L4.5 3Z" fill="#e2e6e9" /></svg>
        <ChevronDown size={8} className="text-[#c9d0d6]" />
      </div>
      <div className={`${txt} w-[47px] bg-[#2f3942] pl-[5px]`}>Concert Pitch</div>
      <div className={`${txt} w-[54px] bg-[#2f3942] pl-[5px] ml-[1px]`}>Bar 74</div>
      <div className={`${txt} w-[84px] bg-[#2f3942] pl-[4px] ml-[1px]`}>Note: C4 (Up-stem Voice 1)</div>
      <svg width="10" height="4" viewBox="0 0 10 4" className="ml-[265px]"><path d="M0 0 Q5 5 10 0 Q5 3 0 0Z" fill="#e2e6e9" stroke="#e2e6e9" strokeWidth="0.5" /></svg>
      <div className="ml-[266px] w-[17px] h-full bg-[#35a6ff] flex items-center justify-center"><div className="w-[9px] h-[8px] border border-dashed border-[#10202c]" /></div>
      <div className="w-[19px] h-full flex items-center justify-center"><Hand size={11} className="text-[#d5dadf]" fill="#d5dadf" /></div>
      <div className={`ml-[2px] w-[56px] h-full bg-[#2f3942] ${bold}`}><span>Galley View</span><ChevronDown size={8} /></div>
      <div className="w-[71px] flex items-center justify-around px-[1px]">
        <div className="flex gap-[1px]"><div className="w-[4px] h-[3px] border border-[#7e8992]" /><div className="w-[4px] h-[3px] border border-[#7e8992]" /></div>
        <div className="flex flex-col gap-[1px]"><div className="w-[5px] h-[3px] border border-[#7e8992]" /><div className="w-[5px] h-[3px] border border-[#7e8992]" /></div>
        <div className="flex gap-[1px]"><div className="w-[2px] h-[3px] bg-[#7e8992]" /><div className="w-[2px] h-[3px] bg-[#7e8992]" /><div className="w-[2px] h-[3px] bg-[#7e8992]" /></div>
        <div className="flex flex-col gap-[1px]"><div className="w-[3px] h-[3px] bg-[#7e8992]" /><div className="w-[3px] h-[3px] bg-[#7e8992]" /></div>
      </div>
      <Search size={8} className="text-[#c9d0d6]" />
      <div className={`ml-[3px] w-[44px] h-full bg-[#2f3942] ${bold}`}><span>200%</span><ChevronDown size={8} /></div>
      <div className="ml-[1px] w-[12px] h-full bg-[#2f3942] flex items-center justify-center"><Minus size={8} strokeWidth={3} className="text-[#d5dadf]" /></div>
      <div className="ml-[1px] w-[12px] h-full bg-[#2f3942] flex items-center justify-center"><Plus size={8} strokeWidth={3} className="text-[#d5dadf]" /></div>
    </div>
  );
}

export default function App() {
  return (
    <div className="w-[1024px] h-[576px] overflow-hidden flex flex-col bg-[#171c21] blur-[0.3px] [font-family:Lato,sans-serif]">
      <TopBar />
      <div className="flex-1 min-h-0 flex">
        <LeftRail />
        <NotePanel />
        <div className="w-[925px] shrink-0 flex flex-col relative">
          <Tabs />
          <div className="h-[345px] shrink-0 bg-white relative overflow-hidden">
            <Score />
            <div className="absolute left-[919px] top-[17px] w-[5px] h-[293px] rounded-full bg-[#8f8f8f]" />
            <div className="absolute left-[852px] bottom-0 w-[14px] h-[4px] rounded-t-[2px] bg-[#9a9a9a]" />
          </div>
          <BottomTools />
          <KeyEditor />
        </div>
        <RightPanel />
      </div>
      <StatusBar />
    </div>
  );
}
